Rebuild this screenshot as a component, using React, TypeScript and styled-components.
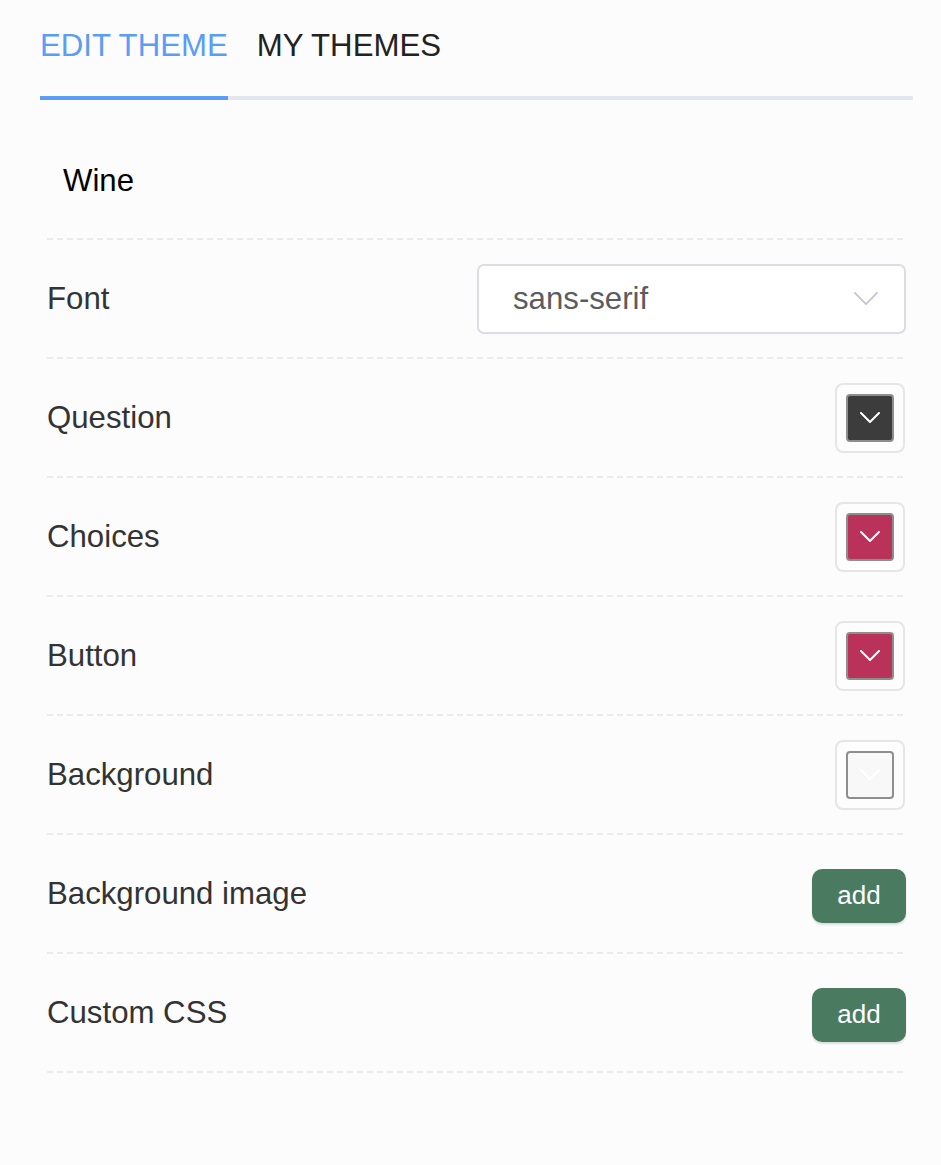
import React from "react";
import styled, { createGlobalStyle } from "styled-components";

const GlobalStyle = createGlobalStyle`
  html, body {
    margin: 0;
    padding: 0;
    background: #fcfcfc;
    font-family: "Liberation Sans", Arial, sans-serif;
  }
  * { box-sizing: border-box; }
`;

const Page = styled.div`
  padding: 28px 28px 90px 40px;
  min-height: 1165px;
`;

const TabBar = styled.div`
  display: flex;
  gap: 29px;
  border-bottom: 4px solid #e4e6ed;
`;

const Tab = styled.div<{ $active?: boolean }>`
  font-size: 31.2px;
  line-height: 36px;
  padding-bottom: 32px;
  margin-bottom: -4px;
  color: ${(p) => (p.$active ? "#5b9cf6" : "#222")};
  border-bottom: 4px solid ${(p) => (p.$active ? "#5b9cf6" : "transparent")};
  cursor: pointer;
`;

const List = styled.div`
  margin: 0 7px;
`;

const Divided = styled.div`
  position: relative;
  &::after {
    content: "";
    position: absolute;
    left: 0;
    right: 0;
    bottom: 0;
    height: 2px;
    background: repeating-linear-gradient(
      to right,
      #ebebeb 0 6px,
      transparent 6px 10px
    );
  }
`;

const NameRow = styled(Divided)`
  padding: 63px 16px 41px;
  font-size: 31.2px;
  line-height: 36px;
  color: #000;
`;

const Row = styled(Divided)`
  display: flex;
  align-items: center;
  justify-content: space-between;
  height: 119px;
  padding-bottom: 2px;
`;

const Label = styled.div`
  font-size: 31.2px;
  line-height: 36px;
  color: #333;
  padding-top: 1px;
`;

const Select = styled.div`
  display: flex;
  align-items: center;
  justify-content: space-between;
  width: 429px;
  height: 70px;
  padding: 0 26px 0 34px;
  background: #fff;
  border: 2px solid #dcdde2;
  border-radius: 7px;
  font-size: 31.2px;
  color: #5c5c5c;
`;

const SwatchFrame = styled.div`
  width: 70px;
  height: 70px;
  margin-right: 1px;
  padding: 9px;
  border: 2px solid #e6e6e6;
  border-radius: 8px;
  background: #fdfdfd;
`;

const Swatch = styled.div<{ $color: string }>`
  width: 100%;
  height: 100%;
  display: flex;
  align-items: center;
  justify-content: center;
  background: ${(p) => p.$color};
  border: 2px solid #8e8e8e;
  border-radius: 4px;
`;

const AddButton = styled.button`
  width: 94px;
  height: 54px;
  margin-top: 4px;
  border: none;
  border-radius: 10px;
  background: #4a7b61;
  color: #fff;
  font-family: "Liberation Sans", Arial, sans-serif;
  font-size: 26px;
  box-shadow: 0 2px 2px rgba(0, 0, 0, 0.12);
  cursor: pointer;
`;

const Chevron = ({ color, w, h, sw }: { color: string; w: number; h: number; sw: number }) => (
  <svg width={w} height={h} viewBox={`0 0 ${w} ${h}`} fill="none">
    <polyline
      points={`${sw / 2},${sw / 2} ${w / 2},${h - sw / 2} ${w - sw / 2},${sw / 2}`}
      stroke={color}
      strokeWidth={sw}
      strokeLinecap="round"
      strokeLinejoin="round"
    />
  </svg>
);

const colorRows = [
  { label: "Question", color: "#3c3c3c" },
  { label: "Choices", color: "#ba3259" },
  { label: "Button", color: "#ba3259" },
  { label: "Background", color: "#f8f8f8" },
];

export default function App() {
  return (
    <>
      <GlobalStyle />
      <Page>
        <TabBar>
          <Tab $active>EDIT THEME</Tab>
          <Tab>MY THEMES</Tab>
        </TabBar>
        <List>
          <NameRow>Wine</NameRow>
          <Row>
            <Label>Font</Label>
            <Select>
              <span>sans-serif</span>
              <Chevron color="#c3c6cf" w={24} h={13} sw={1.8} />
            </Select>
          </Row>
          {colorRows.map((r) => (
            <Row key={r.label}>
              <Label>{r.label}</Label>
              <SwatchFrame>
                <Swatch $color={r.color}>
                  <Chevron color="#fff" w={20} h={11} sw={2} />
                </Swatch>
              </SwatchFrame>
            </Row>
          ))}
          <Row>
            <Label>Background image</Label>
            <AddButton>add</AddButton>
          </Row>
          <Row>
            <Label>Custom CSS</Label>
            <AddButton>add</AddButton>
          </Row>
        </List>
      </Page>
    </>
  );
}
